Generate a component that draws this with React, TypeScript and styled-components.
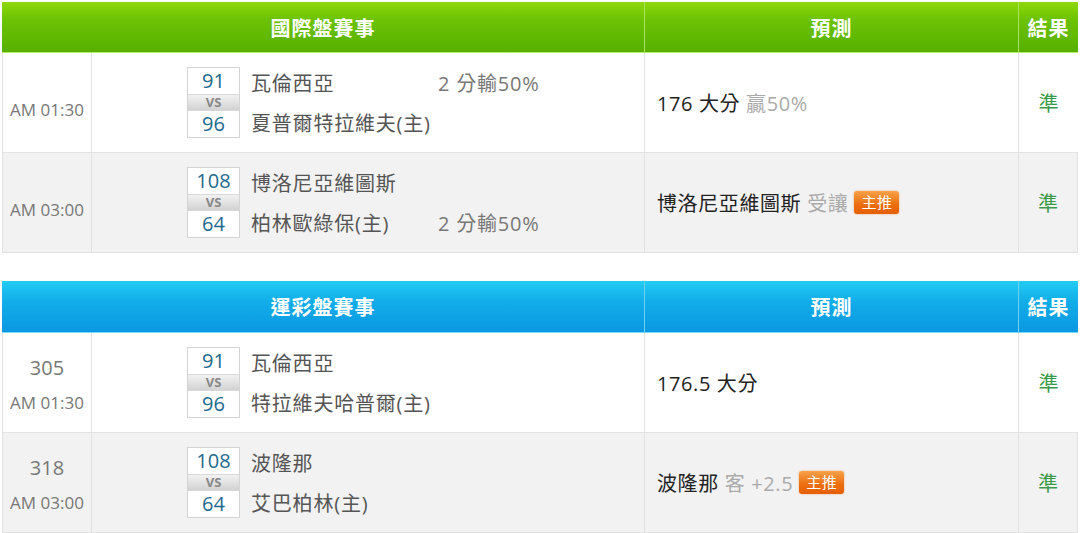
import styled, { createGlobalStyle } from 'styled-components';

const GlobalStyle = createGlobalStyle`
  body {
    margin: 0;
    background: #fff;
    font-family: "Open Sans", "Noto Sans CJK TC", sans-serif;
  }
`;

type Theme = 'green' | 'blue';

const Page = styled.div`
  padding: 2px 2px 0 2px;
  display: flex;
  flex-direction: column;
  gap: 28px;
`;

const Table = styled.div`
  display: grid;
  grid-template-columns: 89px 553px 374px 60px;
  width: 1076px;
`;

const HeaderCell = styled.div<{ $theme: Theme; $span?: number }>`
  grid-column: span ${(p) => p.$span ?? 1};
  height: ${(p) => (p.$theme === 'green' ? 51 : 52)}px;
  box-sizing: border-box;
  display: flex;
  align-items: center;
  justify-content: center;
  color: #fff;
  font-size: 20px;
  font-weight: bold;
  letter-spacing: 1px;
  background: ${(p) =>
    p.$theme === 'green'
      ? 'linear-gradient(#8fd80a 0%, #6cc204 35%, #56b000 100%)'
      : 'linear-gradient(#22cdf3 0%, #12ade9 40%, #0a98e2 100%)'};
  border-left: 1px solid
    ${(p) => (p.$theme === 'green' ? '#a9e45a' : '#6fd0f4')};
  border-bottom: 1px solid
    ${(p) => (p.$theme === 'green' ? '#b5ea6a' : '#7fd7f6')};
  &:first-child {
    border-left: none;
  }
`;

const Cell = styled.div<{ $alt: boolean }>`
  height: 100px;
  background: ${(p) => (p.$alt ? '#f2f2f2' : '#fff')};
  border-bottom: 1px solid #e2e2e2;
  border-left: 1px solid #e2e2e2;
  display: flex;
  align-items: center;
  box-sizing: border-box;
  &:last-child {
    border-right: 1px solid #e2e2e2;
  }
`;

const TimeCell = styled(Cell)<{ $withNo: boolean }>`
  flex-direction: column;
  justify-content: center;
  gap: 12px;
  padding-top: ${(p) => (p.$withNo ? 4 : 14)}px;
  color: #777;
`;

const MatchNo = styled.div`
  font-size: 20px;
  line-height: 24px;
`;

const TimeText = styled.div`
  font-size: 17px;
  line-height: 22px;
`;

const MatchCell = styled(Cell)`
  padding-left: 95px;
`;

const ScoreBox = styled.div`
  width: 53px;
  display: flex;
  flex-direction: column;
  border: 1px solid #d4d4d4;
  box-sizing: border-box;
`;

const Score = styled.div`
  height: 26px;
  background: #fff;
  color: #1d6a8e;
  font-size: 20px;
  line-height: 26px;
  text-align: center;
`;

const Vs = styled.div`
  height: 15px;
  background: linear-gradient(#f2f2f2, #d2d2d2);
  border-top: 1px solid #d8d8d8;
  border-bottom: 1px solid #d8d8d8;
  color: #888;
  font-size: 13px;
  font-weight: bold;
  line-height: 15px;
  text-align: center;
`;

const Teams = styled.div`
  display: flex;
  flex-direction: column;
  justify-content: space-between;
  height: 70px;
  margin-left: 11px;
  padding-top: 2px;
  box-sizing: border-box;
`;

const TeamLine = styled.div`
  display: flex;
  font-size: 20px;
  line-height: 28px;
  letter-spacing: 0.8px;
  color: #555;
`;

const TeamName = styled.span`
  width: 187px;
`;

const Odds = styled.span`
  color: #777;
`;

const PredictCell = styled(Cell)`
  padding-left: 12px;
  font-size: 20px;
  letter-spacing: 0.6px;
  color: #222;
  gap: 6px;
`;

const Muted = styled.span`
  color: #aaa;
`;

const Badge = styled.span`
  display: inline-block;
  padding: 0 7px;
  height: 23px;
  line-height: 23px;
  font-size: 15px;
  letter-spacing: 0.5px;
  color: #fff;
  border-radius: 3px;
  background: linear-gradient(#f7a24a, #ec6d0e 60%, #e55f05);
  box-shadow: 0 0 2px rgba(230, 110, 20, 0.6);
`;

const ResultCell = styled(Cell)`
  justify-content: center;
  color: #3a9a4a;
  font-size: 20px;
`;

type Match = {
  no?: string;
  time: string;
  home: [string, string];
  away: [string, string];
  oddsOn?: 0 | 1;
  odds?: string;
  pick: string;
  note: string;
  star?: boolean;
  result: string;
};

type Section = { title: string; theme: Theme; matches: Match[] };

const sections: Section[] = [
  {
    title: '國際盤賽事',
    theme: 'green',
    matches: [
      {
        time: 'AM 01:30',
        home: ['91', '瓦倫西亞'],
        away: ['96', '夏普爾特拉維夫(主)'],
        oddsOn: 0,
        odds: '2 分輸50%',
        pick: '176 大分',
        note: '贏50%',
        result: '準',
      },
      {
        time: 'AM 03:00',
        home: ['108', '博洛尼亞維圖斯'],
        away: ['64', '柏林歐綠保(主)'],
        oddsOn: 1,
        odds: '2 分輸50%',
        pick: '博洛尼亞維圖斯',
        note: '受讓',
        star: true,
        result: '準',
      },
    ],
  },
  {
    title: '運彩盤賽事',
    theme: 'blue',
    matches: [
      {
        no: '305',
        time: 'AM 01:30',
        home: ['91', '瓦倫西亞'],
        away: ['96', '特拉維夫哈普爾(主)'],
        pick: '176.5 大分',
        note: '',
        result: '準',
      },
      {
        no: '318',
        time: 'AM 03:00',
        home: ['108', '波隆那'],
        away: ['64', '艾巴柏林(主)'],
        pick: '波隆那',
        note: '客 +2.5',
        star: true,
        result: '準',
      },
    ],
  },
];

const MatchRow = ({ m, alt }: { m: Match; alt: boolean }) => (
  <>
    <TimeCell $alt={alt} $withNo={!!m.no}>
      {m.no && <MatchNo>{m.no}</MatchNo>}
      <TimeText>{m.time}</TimeText>
    </TimeCell>
    <MatchCell $alt={alt}>
      <ScoreBox>
        <Score>{m.home[0]}</Score>
        <Vs>VS</Vs>
        <Score>{m.away[0]}</Score>
      </ScoreBox>
      <Teams>
        {[m.home, m.away].map((t, i) => (
          <TeamLine key={i}>
            <TeamName>{t[1]}</TeamName>
            {m.oddsOn === i && <Odds>{m.odds}</Odds>}
          </TeamLine>
        ))}
      </Teams>
    </MatchCell>
    <PredictCell $alt={alt}>
      <span>{m.pick}</span>
      {m.note && <Muted>{m.note}</Muted>}
      {m.star && <Badge>主推</Badge>}
    </PredictCell>
    <ResultCell $alt={alt}>{m.result}</ResultCell>
  </>
);

export default function App() {
  return (
    <>
      <GlobalStyle />
      <Page>
        {sections.map((s) => (
          <Table key={s.title}>
            <HeaderCell $theme={s.theme} $span={2}>
              {s.title}
            </HeaderCell>
            <HeaderCell $theme={s.theme}>預測</HeaderCell>
            <HeaderCell $theme={s.theme}>結果</HeaderCell>
            {s.matches.map((m, i) => (
              <MatchRow key={i} m={m} alt={i % 2 === 1} />
            ))}
          </Table>
        ))}
      </Page>
    </>
  );
}
